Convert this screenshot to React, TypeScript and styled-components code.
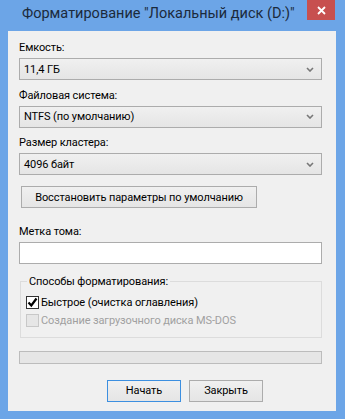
import React from "react";
import styled, { createGlobalStyle } from "styled-components";

const GlobalStyle = createGlobalStyle`
  html, body {
    margin: 0;
    padding: 0;
    background: #6ca5e7;
  }
  * {
    box-sizing: border-box;
  }
`;

const COLORS = {
  frame: "#6ca5e7",
  client: "#f0f0f0",
  border: "#acacac",
  text: "#000000",
  disabled: "#a0a0a0",
  close: "#c7504f",
  accent: "#3c8fe0",
};

const FONT = `Roboto, "Noto Sans", "Liberation Sans", sans-serif`;

const Window = styled.div`
  width: 345px;
  height: 419px;
  display: flex;
  flex-direction: column;
  padding: 0 9px 8px 8px;
  background: ${COLORS.frame};
  font-family: ${FONT};
  font-size: 11px;
  letter-spacing: -0.1px;
  color: ${COLORS.text};
`;

const TitleBar = styled.div`
  height: 31px;
  display: flex;
  justify-content: space-between;
  align-items: flex-start;
`;

const Title = styled.div`
  padding: 4px 0 0 14px;
  font-size: 14.5px;
  letter-spacing: 0;
  line-height: 20px;
  color: #1b2a3c;
  white-space: nowrap;
`;

const CloseButton = styled.button`
  width: 28px;
  height: 20px;
  margin-right: 1px;
  border: 0;
  padding: 0;
  background: ${COLORS.close};
  display: flex;
  align-items: center;
  justify-content: center;
`;

const Client = styled.div`
  flex: 1;
  display: flex;
  flex-direction: column;
  padding: 9px 14px 0 11px;
  background: ${COLORS.client};
`;

const Label = styled.div<{ $top?: number }>`
  line-height: 15px;
  height: 15px;
  margin-top: ${(p) => p.$top ?? 0}px;
  margin-bottom: 3px;
  white-space: nowrap;
`;

const Select = styled.div`
  height: 22px;
  display: flex;
  align-items: center;
  justify-content: space-between;
  padding: 0 7px 0 4px;
  border: 1px solid ${COLORS.border};
  background: linear-gradient(#f0f0f0, #e5e5e5);
  margin-bottom: 7.5px;
`;

const Button = styled.button<{ $default?: boolean }>`
  height: 22px;
  padding: 0;
  font-family: ${FONT};
  font-size: 11px;
  letter-spacing: -0.1px;
  color: ${COLORS.text};
  white-space: nowrap;
  border: 1px solid ${(p) => (p.$default ? COLORS.accent : COLORS.border)};
  background: linear-gradient(#f0f0f0, #e5e5e5);
`;

const RestoreButton = styled(Button)`
  width: 236px;
  margin: 3.5px 0 0 2px;
`;

const TextInput = styled.input`
  height: 22px;
  border: 1px solid ${COLORS.border};
  background: #fff;
  font-family: ${FONT};
  font-size: 11px;
  outline: none;
`;

const GroupBox = styled.fieldset`
  margin: 9.5px 0 0 1px;
  padding: 6px 5px 9px 5px;
  border: 1px solid #dcdcdc;
  display: flex;
  flex-direction: column;
  gap: 3px;
`;

const Legend = styled.legend`
  margin-left: 1px;
  padding: 0 2px;
  line-height: 15px;
`;

const CheckRow = styled.label<{ $disabled?: boolean }>`
  display: flex;
  align-items: center;
  gap: 2px;
  height: 15px;
  color: ${(p) => (p.$disabled ? COLORS.disabled : COLORS.text)};
`;

const CheckBox = styled.span<{ $disabled?: boolean }>`
  width: 13px;
  height: 13px;
  display: flex;
  align-items: center;
  justify-content: center;
  border: 1px solid ${(p) => (p.$disabled ? "#c8c8c8" : "#333")};
  background: ${(p) => (p.$disabled ? "#e6e6e6" : "#fff")};
`;

const Progress = styled.div`
  height: 13px;
  margin-top: 13px;
  border: 1px solid #bcbcbc;
  background: #e6e6e6;
`;

const ButtonRow = styled.div`
  display: flex;
  gap: 8px;
  margin-top: 16px;
  padding-left: 88px;
`;

const DialogButton = styled(Button)`
  width: 74px;
`;

const Chevron = () => (
  <svg width="8" height="5" viewBox="0 0 8 5">
    <path d="M1 1 L4 4 L7 1" fill="none" stroke="#777" strokeWidth="1.6" />
  </svg>
);

const CheckMark = () => (
  <svg width="11" height="11" viewBox="0 0 11 11">
    <path d="M1.5 5.5 L4.3 8.5 L9.5 1.5" fill="none" stroke="#000" strokeWidth="2.2" />
  </svg>
);

const fields = [
  { label: "Емкость:", value: "11,4 ГБ" },
  { label: "Файловая система:", value: "NTFS (по умолчанию)" },
  { label: "Размер кластера:", value: "4096 байт" },
];

export default function App() {
  return (
    <>
      <GlobalStyle />
      <Window>
        <TitleBar>
          <Title>Форматирование "Локальный диск (D:)"</Title>
          <CloseButton>
            <svg width="9" height="9" viewBox="0 0 9 9">
              <path d="M1 1 L8 8 M8 1 L1 8" stroke="#fff" strokeWidth="1.8" />
            </svg>
          </CloseButton>
        </TitleBar>
        <Client>
          {fields.map(({ label, value }) => (
            <React.Fragment key={label}>
              <Label>{label}</Label>
              <Select>
                <span>{value}</span>
                <Chevron />
              </Select>
            </React.Fragment>
          ))}
          <RestoreButton>Восстановить параметры по умолчанию</RestoreButton>
          <Label $top={16}>Метка тома:</Label>
          <TextInput />
          <GroupBox>
            <Legend>Способы форматирования:</Legend>
            <CheckRow>
              <CheckBox>
                <CheckMark />
              </CheckBox>
              Быстрое (очистка оглавления)
            </CheckRow>
            <CheckRow $disabled>
              <CheckBox $disabled />
              Создание загрузочного диска MS-DOS
            </CheckRow>
          </GroupBox>
          <Progress />
          <ButtonRow>
            <DialogButton $default>Начать</DialogButton>
            <DialogButton>Закрыть</DialogButton>
          </ButtonRow>
        </Client>
      </Window>
    </>
  );
}
